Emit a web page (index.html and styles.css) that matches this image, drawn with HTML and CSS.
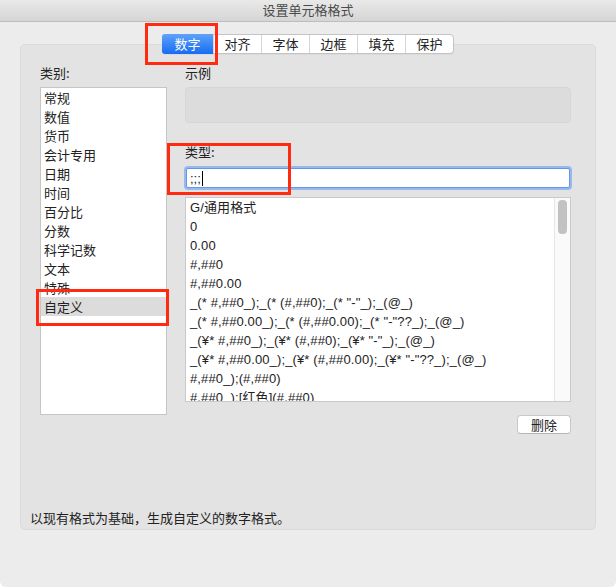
FILE: index.html
```html
<!DOCTYPE html>
<html lang="zh-CN">
<head>
    <meta charset="UTF-8">
    <meta name="viewport" content="width=device-width, initial-scale=1.0">
    <title>设置单元格格式</title>
    <link rel="stylesheet" href="styles.css">
</head>
<body>
    <div class="window">
        <div class="title-bar">设置单元格格式</div>

        <div class="tabs">
            <div class="tab active">数字</div>
            <div class="tab">对齐</div>
            <div class="tab">字体</div>
            <div class="tab">边框</div>
            <div class="tab">填充</div>
            <div class="tab">保护</div>
        </div>

        <div class="panel">
            <div class="columns">
                <!-- category list -->
                <div class="category-col">
                    <div class="label">类别:</div>
                    <ul class="category-list">
                        <li>常规</li>
                        <li>数值</li>
                        <li>货币</li>
                        <li>会计专用</li>
                        <li>日期</li>
                        <li>时间</li>
                        <li>百分比</li>
                        <li>分数</li>
                        <li>科学记数</li>
                        <li>文本</li>
                        <li>特殊</li>
                        <li class="selected">自定义</li>
                    </ul>
                </div>

                <!-- sample, type and formats -->
                <div class="detail-col">
                    <div class="label">示例</div>
                    <div class="sample"></div>

                    <div class="label type-label">类型:</div>
                    <div class="type-input"><span>;;;</span><span class="caret"></span></div>

                    <div class="format-list">
                        <ul>
                            <li>G/通用格式</li>
                            <li>0</li>
                            <li>0.00</li>
                            <li>#,##0</li>
                            <li>#,##0.00</li>
                            <li>_(* #,##0_);_(* (#,##0);_(* "-"_);_(@_)</li>
                            <li>_(* #,##0.00_);_(* (#,##0.00);_(* "-"??_);_(@_)</li>
                            <li>_(¥* #,##0_);_(¥* (#,##0);_(¥* "-"_);_(@_)</li>
                            <li>_(¥* #,##0.00_);_(¥* (#,##0.00);_(¥* "-"??_);_(@_)</li>
                            <li>#,##0_);(#,##0)</li>
                            <li>#,##0_);[红色](#,##0)</li>
                            <li>#,##0.00_);(#,##0.00)</li>
                        </ul>
                        <div class="scrollbar"><div class="thumb"></div></div>
                    </div>

                    <div class="actions">
                        <button class="btn">删除</button>
                    </div>
                </div>
            </div>

            <p class="hint">以现有格式为基础，生成自定义的数字格式。</p>
        </div>

        <!-- red annotation boxes -->
        <div class="mark mark-tab"></div>
        <div class="mark mark-type"></div>
        <div class="mark mark-custom"></div>
    </div>
</body>
</html>
```

FILE: styles.css
```css
:root {
    --window-bg: #ececec;
    --panel-bg: #e3e3e3;
    --border-color: #c6c6c6;
    --text-primary: #222222;
    --accent: #1b6ff2;
    --mark: #ff2a10;
}

* {
    margin: 0;
    padding: 0;
    box-sizing: border-box;
}

body {
    background: #ffffff;
    font-family: "Liberation Sans", "Noto Sans CJK SC", sans-serif;
    font-size: 13px;
    color: var(--text-primary);
}

ul {
    list-style: none;
}

.window {
    position: relative;
    width: 616px;
    height: 587px;
    background: var(--window-bg);
    border-radius: 0 0 6px 6px;
    display: flex;
    flex-direction: column;
}

.title-bar {
    height: 22px;
    line-height: 20px;
    text-align: center;
    color: #4a4a4a;
    font-family: "Noto Sans CJK SC", sans-serif;
    background: linear-gradient(#e9e9e9, #d5d5d5);
    border-bottom: 1px solid #bdbdbd;
}

.tabs {
    position: relative;
    z-index: 1;
    display: flex;
    align-self: center;
    margin-top: 12px;
    height: 20px;
    background: #ffffff;
    border: 1px solid #c4c4c4;
    border-radius: 4px;
    box-shadow: 0 1px 0 rgba(0, 0, 0, 0.04);
}

.tab {
    width: 48px;
    line-height: 18px;
    text-align: center;
    font-family: "Noto Sans CJK SC", sans-serif;
    border-left: 1px solid #d6d6d6;
}

.tab:first-child {
    width: 50px;
    border-left: none;
}

.tab.active {
    color: #ffffff;
    background: linear-gradient(#5ea2fb, #176cf2);
    border-radius: 3px 0 0 3px;
    margin: -1px 0 -1px -1px;
    line-height: 20px;
    width: 51px;
}

.panel {
    flex: none;
    height: 486px;
    margin: -10px 20px 0;
    padding: 20px 24px 3px 9px;
    background: var(--panel-bg);
    border: 1px solid #dadada;
    border-radius: 5px;
    display: flex;
    flex-direction: column;
}

.columns {
    display: flex;
    gap: 18px;
    margin-left: 10px;
}

.label {
    height: 16px;
    line-height: 16px;
    margin-bottom: 6px;
    font-family: "Noto Sans CJK SC", sans-serif;
}

.category-col {
    width: 127px;
}

.category-list {
    height: 328px;
    background: #ffffff;
    border: 1px solid var(--border-color);
    font-family: "Noto Sans CJK SC", sans-serif;
}

.category-list li {
    height: 19px;
    line-height: 19px;
    padding-left: 3px;
}

.category-list li.selected {
    background: #dcdcdc;
}

.detail-col {
    flex: 1;
    display: flex;
    flex-direction: column;
}

.sample {
    height: 36px;
    background: #dcdcdc;
    border: 1px solid #d6d6d6;
    border-radius: 4px;
}

.type-label {
    margin-top: 21px;
    margin-bottom: 8px;
}

.type-input {
    display: flex;
    align-items: center;
    height: 20px;
    margin: 0 1px;
    padding-left: 3px;
    background: #ffffff;
    border: 1px solid #6995e4;
    box-shadow: 0 0 0 2px #98b9ef;
    border-radius: 2px;
    font-size: 13px;
}

.caret {
    width: 1px;
    height: 15px;
    margin-left: 1px;
    background: #000000;
}

.format-list {
    display: flex;
    height: 205px;
    margin-top: 9px;
    background: #ffffff;
    border: 1px solid #c9c9c9;
    overflow: hidden;
}

.format-list ul {
    flex: 1;
    padding: 0 0 0 4px;
    white-space: nowrap;
    overflow: hidden;
    letter-spacing: 0.12px;
}

.format-list li {
    height: 19px;
    line-height: 19px;
}

.scrollbar {
    width: 16px;
    background: #fafafa;
    border-left: 1px solid #e6e6e6;
    padding: 2px 3px 0;
}

.thumb {
    height: 34px;
    background: #c2c2c2;
    border-radius: 4px;
}

.actions {
    display: flex;
    justify-content: flex-end;
    margin-top: 13px;
}

.btn {
    width: 54px;
    height: 19px;
    background: #ffffff;
    border: 1px solid #c8c8c8;
    border-bottom-color: #b5b5b5;
    border-radius: 4px;
    font-family: "Noto Sans CJK SC", sans-serif;
    font-size: 13px;
    line-height: 17px;
    color: var(--text-primary);
}

.hint {
    margin-top: auto;
    height: 16px;
    line-height: 16px;
    font-family: "Noto Sans CJK SC", sans-serif;
}

.mark {
    position: absolute;
    border: 3px solid var(--mark);
    z-index: 2;
}

.mark-tab {
    left: 145px;
    top: 23px;
    width: 73px;
    height: 42px;
}

.mark-type {
    left: 167px;
    top: 143px;
    width: 124px;
    height: 52px;
}

.mark-custom {
    left: 36px;
    top: 289px;
    width: 133px;
    height: 37px;
}
```
